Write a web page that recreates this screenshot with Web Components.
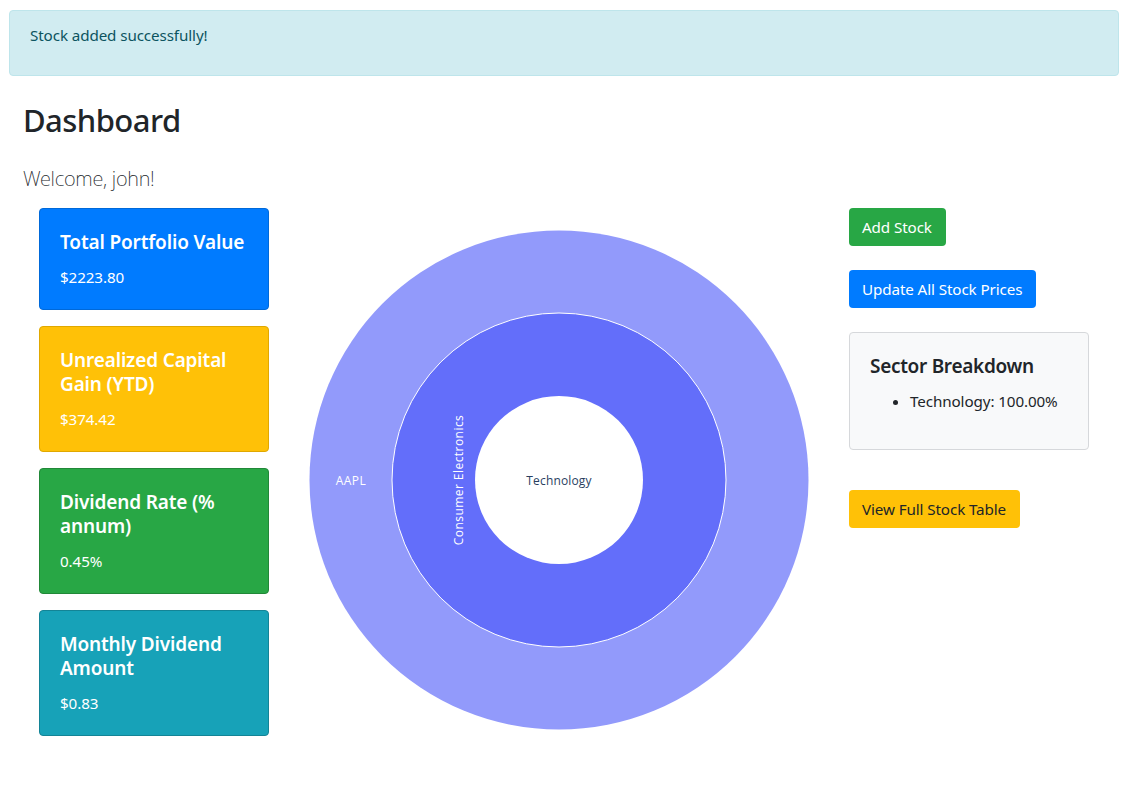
<!DOCTYPE html>
<html><head><meta charset="utf-8">
<style>
html,body{margin:0;background:#fff}
body{font-family:"Noto Sans","Open Sans","Liberation Sans",sans-serif;font-size:15.2px;line-height:24px;letter-spacing:-.1px;color:#212529}
</style></head><body>
<x-dashboard>
  <x-alert>Stock added successfully!</x-alert>
  <x-stat slot="cards" color="#007bff" border="#0069d9" label="Total Portfolio Value" value="$2223.80"></x-stat>
  <x-stat slot="cards" color="#ffc107" border="#e0a800" label="Unrealized Capital Gain (YTD)" value="$374.42"></x-stat>
  <x-stat slot="cards" color="#28a745" border="#218838" label="Dividend Rate (% annum)" value="0.45%"></x-stat>
  <x-stat slot="cards" color="#17a2b8" border="#138496" label="Monthly Dividend Amount" value="$0.83"></x-stat>
  <x-sunburst slot="chart"></x-sunburst>
  <x-btn slot="side" color="#28a745" text="#fff">Add Stock</x-btn>
  <x-btn slot="side" color="#007bff" text="#fff">Update All Stock Prices</x-btn>
  <x-sector slot="side"></x-sector>
  <x-btn slot="side" color="#ffc107" text="#212529" style="margin-top:16px">View Full Stock Table</x-btn>
</x-dashboard>
<script>
function def(name,html){
  customElements.define(name,class extends HTMLElement{
    connectedCallback(){
      if(this.shadowRoot)return;
      const r=this.attachShadow({mode:'open'});
      r.innerHTML=typeof html==='function'?html(this):html;
    }
  });
}
def('x-dashboard',`<style>
:host{display:block;width:1110px;padding:10px 0 0 9px}
.wrap{padding:10px 15px 0}
h2{margin:0 0 26px -1px;font-size:31px;line-height:36px;font-weight:500;letter-spacing:-.55px}
p{margin:0 0 14px -1px;font-size:20px;line-height:30px;font-weight:200;letter-spacing:-.25px;color:#212529}
.row{display:grid;grid-template-columns:260px 550px 270px;width:1080px}
.cards{display:flex;flex-direction:column;gap:16px;padding:0 15px}
.chart{padding:0 25px}
.side{display:flex;flex-direction:column;align-items:flex-start;gap:24px;padding:0 15px}
::slotted(x-alert){margin-bottom:16px}
</style>
<slot></slot>
<div class="wrap">
<h2>Dashboard</h2>
<p>Welcome, john!</p>
<div class="row">
<div class="cards"><slot name="cards"></slot></div>
<div class="chart"><slot name="chart"></slot></div>
<div class="side"><slot name="side"></slot></div>
</div></div>`);
def('x-alert',`<style>
:host{display:block;box-sizing:border-box;height:66px;padding:12px 20px;background:#d1ecf1;border:1px solid #bee5eb;border-radius:4px;color:#0c5460}
</style><slot></slot>`);
def('x-stat',el=>`<style>
:host{display:block;box-sizing:border-box;padding:20px;border-radius:4px;border:1px solid ${el.getAttribute('border')};background:${el.getAttribute('color')};color:#fff}
h5{margin:0 0 11px;padding-top:1px;font-size:19px;line-height:24px;font-weight:600;letter-spacing:-.15px}
p{margin:0}
</style><h5>${el.getAttribute('label')}</h5><p>${el.getAttribute('value')}</p>`);
def('x-btn',el=>`<style>
:host{display:inline-block;box-sizing:border-box;height:38px;padding:7px 14px 7px 13px;border-radius:4px;background:${el.getAttribute('color')};color:${el.getAttribute('text')};white-space:nowrap}
</style><slot></slot>`);
def('x-sector',`<style>
:host{display:block;box-sizing:border-box;width:240px;padding:20px;background:#f8f9fa;border:1px solid #d6d8db;border-radius:4px}
h5{margin:0 0 11px;padding-top:1px;font-size:19px;line-height:24px;font-weight:600;letter-spacing:-.3px}
ul{margin:0 0 16px;padding-left:40px}
li{white-space:nowrap}
</style><h5>Sector Breakdown</h5><ul><li>Technology: 100.00%</li></ul>`);
def('x-sunburst',`<style>
:host{display:block;width:500px;height:540px}
svg{display:block}
text{font-family:"Open Sans","Noto Sans",sans-serif;font-size:12px}
</style>
<svg width="500" height="540" viewBox="0 0 500 540">
<circle cx="250" cy="272" r="249.5" fill="#929afb"/>
<circle cx="250" cy="272" r="167" fill="#636efa" stroke="#fff" stroke-width="1"/>
<circle cx="250" cy="272" r="84" fill="#fff"/>
<text x="250" y="277" text-anchor="middle" fill="#2a3f5f" style="letter-spacing:.15px">Technology</text>
<text x="42" y="277" text-anchor="middle" fill="#fff" style="letter-spacing:.4px">AAPL</text>
<text transform="translate(153.5 272) rotate(-90)" text-anchor="middle" fill="#fff" style="letter-spacing:.45px">Consumer Electronics</text>
</svg>`);
</script>
</body></html>
